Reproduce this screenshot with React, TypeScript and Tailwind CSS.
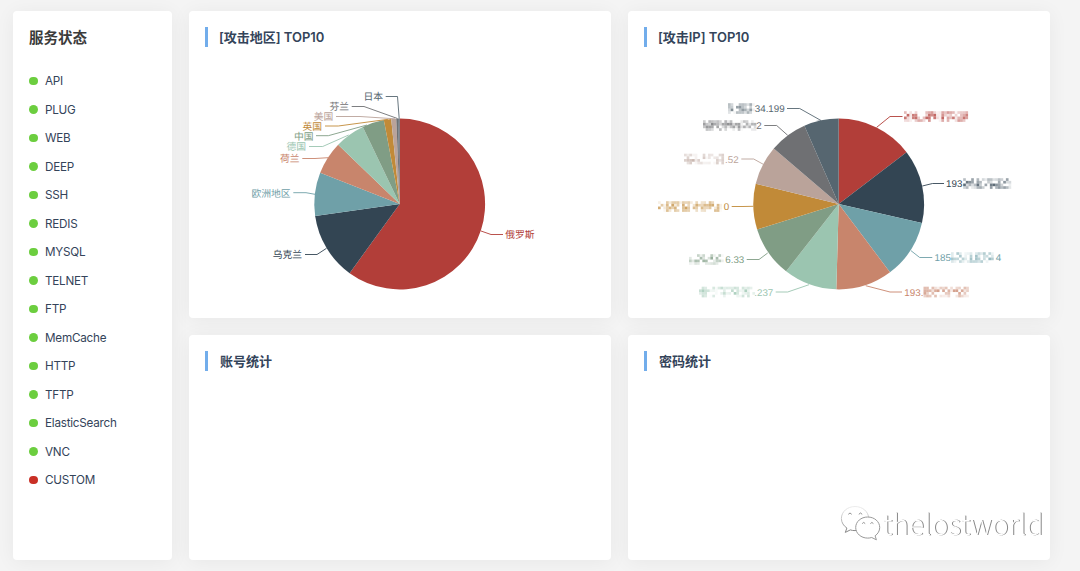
import React from "react";

type Point = [number, number];

interface Slice {
  end: number;
  color: string;
  line: Point[];
  text?: string;
  textX: number;
  width?: number;
  mask?: [number, number];
  tail?: string;
}

const services = [
  { name: "API", up: true },
  { name: "PLUG", up: true },
  { name: "WEB", up: true },
  { name: "DEEP", up: true },
  { name: "SSH", up: true },
  { name: "REDIS", up: true },
  { name: "MYSQL", up: true },
  { name: "TELNET", up: true },
  { name: "FTP", up: true },
  { name: "MemCache", up: true },
  { name: "HTTP", up: true },
  { name: "TFTP", up: true },
  { name: "ElasticSearch", up: true },
  { name: "VNC", up: true },
  { name: "CUSTOM", up: false },
];

// Coordinates are relative to the centre of the chart; angles run clockwise from the top.
const regions: Slice[] = [
  { end: 215.9, color: "#b23e39", line: [[81, 27], [91, 30.5], [103, 30.5]], text: "俄罗斯", textX: 105.3, width: 29.3 },
  { end: 261.9, color: "#334553", line: [[-73.5, 44.3], [-83, 50.5], [-95, 50.5]], text: "乌克兰", textX: -98, width: 29.3 },
  { end: 291.4, color: "#6fa0a8", line: [[-85, -9.7], [-94, -11.3], [-106.7, -11.3]], text: "欧洲地区", textX: -109.5, width: 39 },
  { end: 313.9, color: "#c8856c", line: [[-72, -46.3], [-85, -45.5], [-97.7, -45.5]], text: "荷兰", textX: -100.5, width: 19.5 },
  { end: 334.4, color: "#9bc5b0", line: [[-51.3, -69], [-77.3, -57.5], [-91, -57.5]], text: "德国", textX: -94, width: 19.5 },
  { end: 349.3, color: "#809d85", line: [[-33, -79], [-71.7, -68.3], [-84, -68.3]], text: "中国", textX: -86.5, width: 19.5 },
  { end: 354.3, color: "#c18a38", line: [[-12, -84.7], [-61.7, -78], [-75, -78]], text: "英国", textX: -78, width: 19.5 },
  { end: 357.7, color: "#baa39a", line: [[-5, -85.2], [-40, -87.5], [-64, -87.5]], text: "美国", textX: -66.7, width: 19.5 },
  { end: 359, color: "#6f7073", line: [[-2.5, -85.5], [-36, -97.5], [-48.3, -97.5]], text: "芬兰", textX: -51, width: 19.5 },
  { end: 360, color: "#566670", line: [[-0.8, -85.5], [-2.5, -107.5], [-14.3, -107.5]], text: "日本", textX: -17, width: 19.5 },
];

const addresses: Slice[] = [
  { end: 52.6, color: "#b23e39", line: [[37.7, -76.7], [51, -87.5], [63.5, -87.5]], textX: 66, mask: [65, 130] },
  { end: 102.9, color: "#334553", line: [[83.3, -18], [93.5, -20.5], [105, -20.5]], text: "193", textX: 107, mask: [121.5, 173] },
  { end: 143.1, color: "#6fa0a8", line: [[72, 46.7], [80.7, 53.5], [93.3, 53.5]], text: "185", textX: 95.5, mask: [112, 155], tail: "4" },
  { end: 181.6, color: "#c8856c", line: [[26.7, 81.7], [51, 88], [63, 88]], text: "193.", textX: 65.3, mask: [84.5, 130] },
  { end: 218, color: "#9bc5b0", line: [[-30, 80.7], [-51.3, 88], [-63.3, 88]], text: ".237", textX: -65.7, mask: [-140, -85] },
  { end: 252.7, color: "#809d85", line: [[-71.3, 49], [-80, 55.5], [-92.3, 55.5]], text: "6.33", textX: -94.7, mask: [-150, -115.5] },
  { end: 283.7, color: "#c18a38", line: [[-85.5, 2.3], [-96, 2.5], [-107.3, 2.5]], text: "0", textX: -109.7, mask: [-181, -117] },
  { end: 310.5, color: "#baa39a", line: [[-75.7, -39.7], [-85.3, -45], [-97.7, -45]], text: ".52", textX: -100.3, mask: [-155, -115] },
  { end: 336.3, color: "#6f7073", line: [[-51.3, -68.7], [-62.3, -78.5], [-74.7, -78.5]], text: "2", textX: -77.3, mask: [-136, -83.5] },
  { end: 360, color: "#566670", line: [[-18, -83.5], [-39.3, -95.5], [-52, -95.5]], text: "34.199", textX: -54.3, mask: [-111, -84] },
];

const RADIUS = 85.4;

function sector(start: number, end: number) {
  const at = (deg: number) => {
    const a = (deg * Math.PI) / 180;
    return `${(Math.sin(a) * RADIUS).toFixed(2)} ${(-Math.cos(a) * RADIUS).toFixed(2)}`;
  };
  return `M0 0L${at(start)}A${RADIUS} ${RADIUS} 0 ${end - start > 180 ? 1 : 0} 1 ${at(end)}Z`;
}

function noise(n: number) {
  const v = Math.sin(n * 12.9898 + 4.137) * 43758.5453;
  return v - Math.floor(v);
}

function Mosaic({ from, to, y, color, seed }: { from: number; to: number; y: number; color: string; seed: number }) {
  const cell = 2.67;
  const cols = Math.round((to - from) / cell);
  const cells = [];
  for (let c = 0; c < cols; c++) {
    const gap = noise(seed * 17 + c * 3.1) < 0.12;
    for (let r = 0; r < 4; r++) {
      const v = noise(seed * 101 + c * 7.3 + r * 31.7);
      const weight = (r === 0 || r === 3 ? 0.65 : 0.95) * (gap ? 0.3 : 1);
      if (v < 0.3) continue;
      cells.push(
        <rect key={`${c}-${r}`} x={from + c * cell} y={y - 5.3 + r * cell} width={cell} height={cell} fill={color} opacity={(v - 0.15) * weight} />
      );
    }
  }
  return <g className="[filter:blur(0.4px)]">{cells}</g>;
}

function Pie({ slices }: { slices: Slice[] }) {
  return (
    <svg className="block w-full h-[258px]" viewBox="-211 -144 422 258" textRendering="geometricPrecision">
      <g transform="translate(-0.3 0)">
        {slices.map((s, i) => (
          <path key={i} d={sector(i ? slices[i - 1].end : 0, s.end)} fill={s.color} />
        ))}
      </g>
      {slices.map((s, i) => {
        const y = s.line[2][1];
        const right = s.textX > 0;
        return (
          <g key={i}>
            <polyline points={s.line.map((p) => p.join(",")).join(" ")} fill="none" stroke={s.color} strokeWidth="0.9" />
            {s.text && (
              <text x={s.textX} y={y + 3.8} textAnchor={right ? "start" : "end"} textLength={s.width} fill={s.color} className="text-[9.8px]">
                {s.text}
              </text>
            )}
            {s.mask && <Mosaic from={s.mask[0]} to={s.mask[1]} y={y} color={s.color} seed={i + 1} />}
            {s.tail && (
              <text x={s.mask![1] + 1.8} y={y + 3.8} fill={s.color} className="text-[9.8px]">
                {s.tail}
              </text>
            )}
          </g>
        );
      })}
    </svg>
  );
}

function Card({ title, wide, children }: { title: string; wide?: boolean; children?: React.ReactNode }) {
  return (
    <section className="rounded-[4px] bg-white pt-4 shadow-[0_2px_20px_rgba(0,0,0,0.055)] overflow-hidden">
      <header className="ml-4 flex h-5 items-center">
        <span className="h-5 w-[3px] bg-[#72adeb]" />
        <h2 className={`${wide ? "ml-3" : "ml-[11px]"} whitespace-nowrap pb-px text-[13px] font-semibold leading-[18px] tracking-[-0.02px] text-[#34445a] [font-family:Inter,'Noto_Sans_CJK_SC',sans-serif]`}>
          {title}
        </h2>
      </header>
      {children && <div className="mt-[13px]">{children}</div>}
    </section>
  );
}

function Watermark() {
  return (
    <svg className="absolute left-[836px] top-[500px] h-[50px] w-[216px]" viewBox="836 500 216 50" textRendering="geometricPrecision">
      <defs>
        <linearGradient id="rim" x1="0" y1="0" x2="0" y2="1">
          <stop offset="0" stopColor="#ececec" />
          <stop offset="0.45" stopColor="#c8c8c8" />
          <stop offset="0.9" stopColor="#888888" />
        </linearGradient>
      </defs>
      <path
        d="M855 506.5c-7.7 0-13.6 5.3-13.6 12 0 4 2.2 7.4 5.5 9.5l-1.6 4.4 5-2.5c1.5.5 3 .7 4.7.7 7.7 0 13.7-5.2 13.7-12s-6-12.1-13.7-12.1Z"
        fill="#fff"
        stroke="url(#rim)"
        strokeWidth="1"
      />
      <path
        d="M867.7 517c-6.7 0-12 4.6-12 10.5s5.3 10.6 12 10.6c1.4 0 2.8-.2 4-.6l4.7 2.3-1.3-4c2.8-1.9 4.6-4.9 4.6-8.3 0-5.9-5.3-10.5-12-10.5Z"
        fill="#fff"
        stroke="#9a9a9a"
        strokeWidth="1"
      />
      <g fill="none" stroke="#858585" strokeWidth="0.9">
        <path d="M848.3 514.3q1.7-2.6 3.4 0M858.8 514.3q1.7-2.6 3.4 0M862.2 523.6q1.5-2.3 3 0M870.4 523.6q1.5-2.3 3 0" />
      </g>
      <text
        x="882.5"
        y="535"
        textLength="161"
        fill="#fff"
        className="[font-family:'Noto_Sans_CJK_SC','Noto_Sans',sans-serif] text-[28px] font-light [filter:drop-shadow(1px_0.8px_0.35px_rgba(60,60,60,0.62))]"
      >
        thelostworld
      </text>
    </svg>
  );
}

export default function App() {
  return (
    <div className="relative flex h-[571px] w-[1080px] gap-[17px] overflow-hidden bg-[#f4f4f4] pb-[11px] pl-[13px] pr-[30px] pt-[11px] [font-family:'Liberation_Sans','Noto_Sans_CJK_SC',sans-serif]">
      <aside className="w-[159px] shrink-0 rounded-[4px] bg-white px-4 pt-4 shadow-[0_2px_20px_rgba(0,0,0,0.055)]">
        <h1 className="text-[14.5px] font-bold leading-[22px] text-[#3b3b3b]">服务状态</h1>
        <ul className="mt-[18px]">
          {services.map((s) => (
            <li key={s.name} className="flex h-[28.47px] items-center">
              <span className={`h-[8.5px] w-[8.5px] rounded-full ${s.up ? "bg-[#6cce3f]" : "bg-[#c93026]"}`} />
              <span className="ml-[7.5px] pt-[2px] text-[11.7px] tracking-[-0.23px] text-[#34445a] [font-family:Inter,sans-serif]">{s.name}</span>
            </li>
          ))}
        </ul>
      </aside>
      <main className="grid flex-1 grid-cols-2 grid-rows-[307px_225px] gap-[17px]">
        <Card title="[攻击地区] TOP10">
          <Pie slices={regions} />
        </Card>
        <Card title="[攻击IP] TOP10">
          <Pie slices={addresses} />
        </Card>
        <Card title="账号统计" wide />
        <Card title="密码统计" wide />
      </main>
      <Watermark />
    </div>
  );
}
